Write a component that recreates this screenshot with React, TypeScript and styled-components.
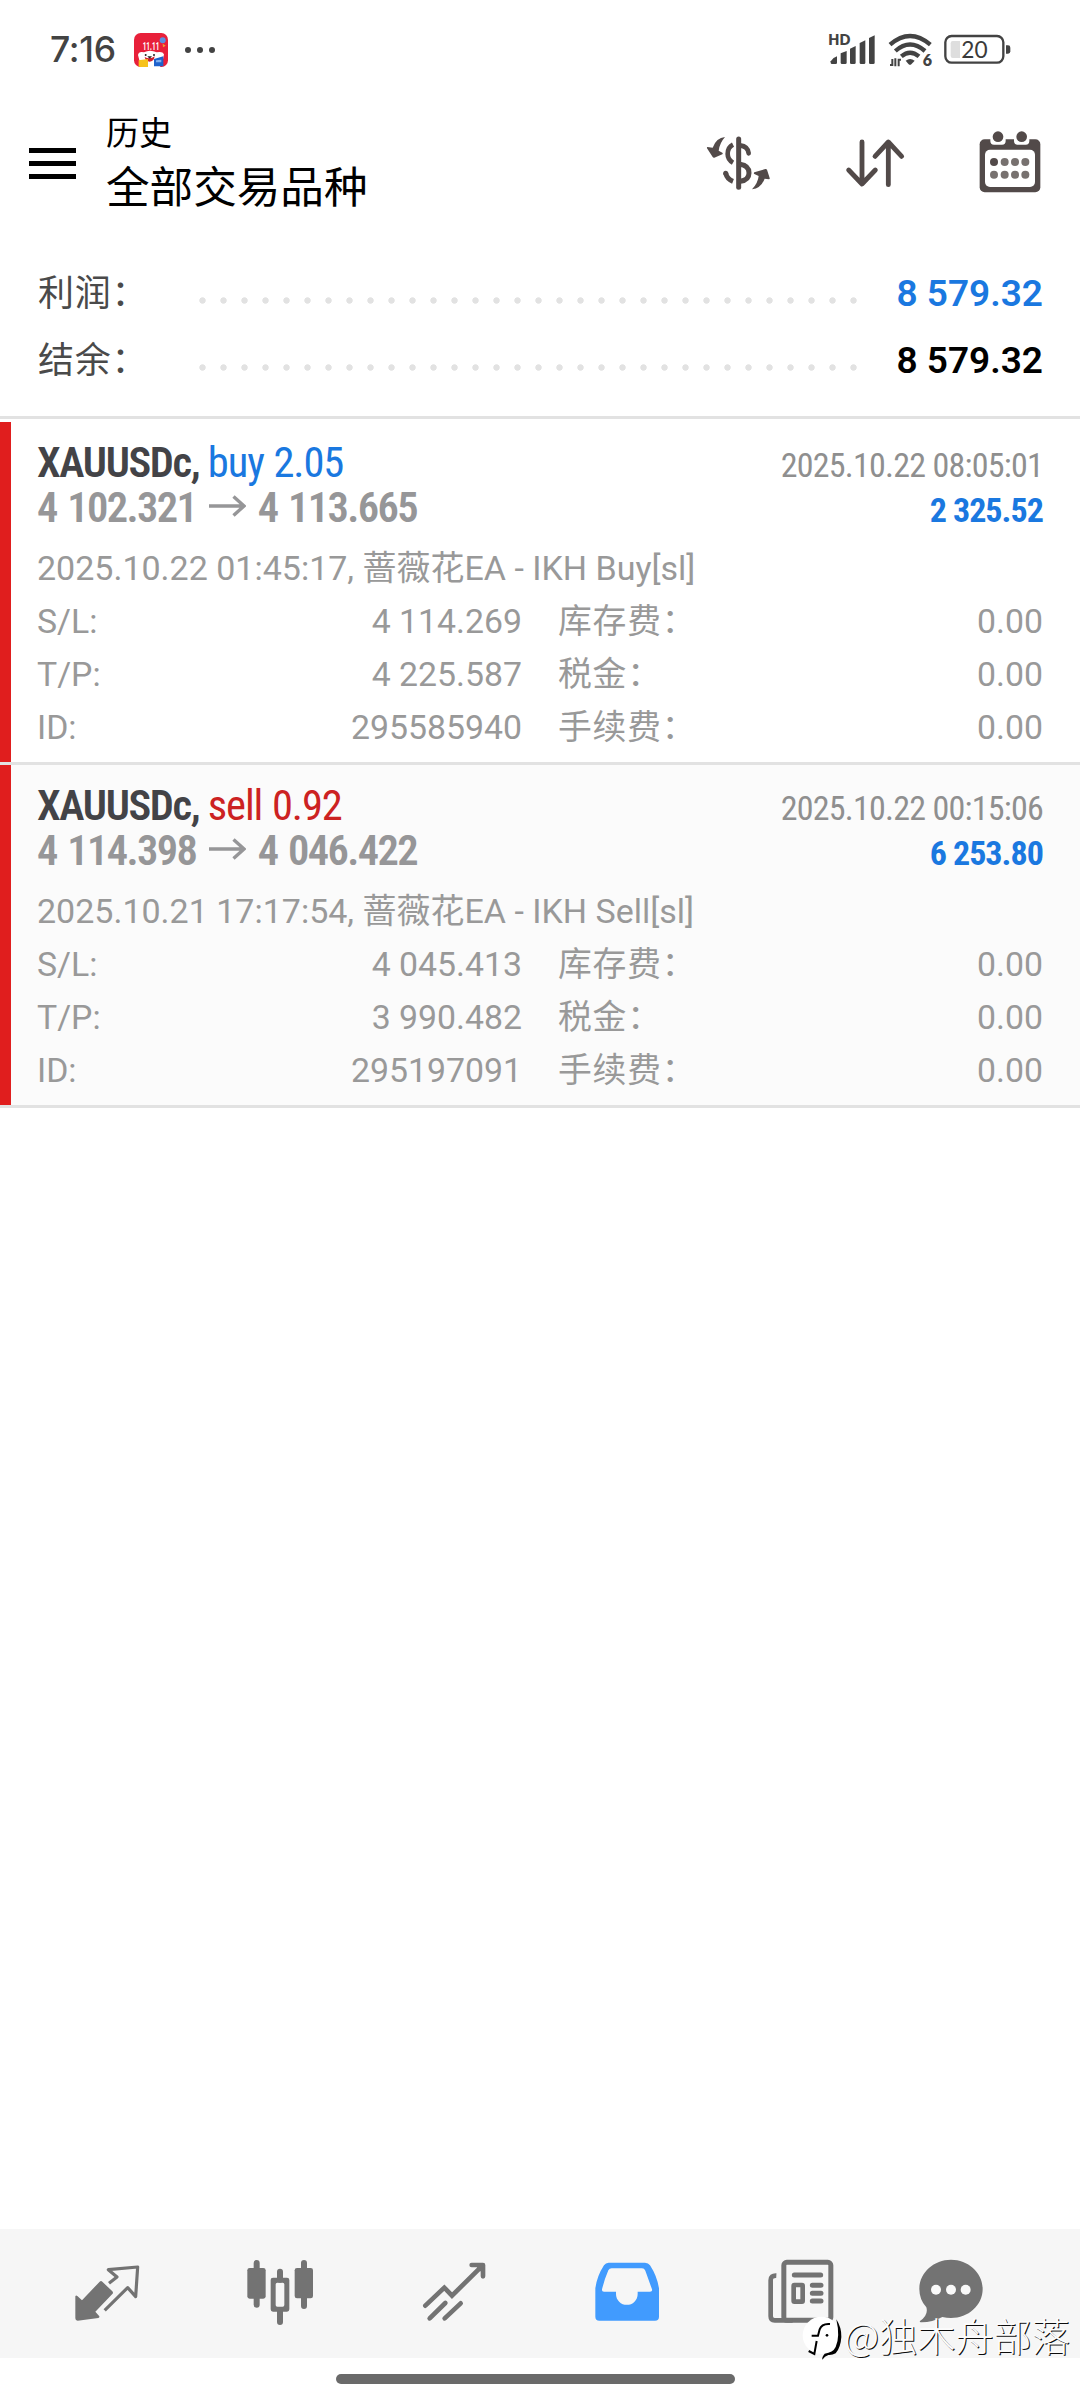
import React from "react";
import styled, { createGlobalStyle } from "styled-components";

const Global = createGlobalStyle`
  * { box-sizing: border-box; }
  body { margin: 0; background: #fff; }
`;

const SANS = `Roboto, "Noto Sans CJK SC", sans-serif`;
const CJK = `"Noto Sans CJK SC", Roboto, sans-serif`;
const BLUE = "#1a78e0";
const RED = "#cc2222";

const Screen = styled.div`
  position: relative;
  display: flex;
  flex-direction: column;
  width: 1080px;
  height: 2400px;
  background: #fff;
  font-family: ${SANS};
  overflow: hidden;
`;

/* ---------- status bar ---------- */
const StatusBar = styled.div`
  display: flex;
  align-items: center;
  justify-content: space-between;
  height: 100px;
  padding: 0 69px 0 50px;
`;
const StatusGroup = styled.div`
  display: flex;
  align-items: center;
`;
const Clock = styled.span`
  width: 84px;
  font: 500 35.5px/40px Inter, sans-serif;
  letter-spacing: -0.3px;
  color: #434343;
`;
const MoreDots = styled.div`
  display: flex;
  gap: 6px;
  margin-left: 17px;
`;
const Dot = styled.i`
  width: 6px;
  height: 6px;
  border-radius: 50%;
  background: #434343;
`;
const SignalSlot = styled.div`
  display: flex;
  gap: 11.5px;
  align-items: center;
`;

/* ---------- header ---------- */
const Header = styled.header`
  display: flex;
  align-items: center;
  height: 126px;
  padding: 0 35px 0 29px;
`;
const MenuButton = styled.div`
  display: flex;
  flex-direction: column;
  gap: 8px;
  width: 47px;
`;
const MenuLine = styled.i`
  height: 5px;
  background: #000;
`;
const Titles = styled.div`
  flex: 1;
  margin-left: 30px;
  padding-bottom: 3px;
  color: #000;
  font-family: ${CJK};
`;
const Caption = styled.div`
  font-size: 33px;
  line-height: 46px;
`;
const Title = styled.div`
  font-size: 43.6px;
  line-height: 61px;
`;
const Actions = styled.div`
  display: flex;
  gap: 65.5px;
`;

/* ---------- summary ---------- */
const Summary = styled.section`
  height: 193px;
  padding: 33px 37px 0;
  border-bottom: 3px solid #e2e2e2;
`;
const SummaryRow = styled.div`
  display: flex;
  align-items: center;
  height: 66.7px;
`;
const SummaryLabel = styled.span`
  width: 155px;
  padding: 0 0 4px 1px;
  font: 400 36px/64px ${CJK};
  letter-spacing: 0.8px;
  color: #4a4a4a;
`;
const Leader = styled.div`
  width: 672px;
  height: 21px;
  margin-top: 17px;
  background: radial-gradient(circle at 50% 50%, #e2e2e2 2.8px, transparent 3.6px) 0 0 / 21px 21px repeat-x;
`;
const SummaryValue = styled.span<{ $color: string }>`
  flex: 1;
  padding-top: 3px;
  text-align: right;
  font-size: 37px;
  font-weight: 600;
  line-height: 62px;
  color: ${(p) => p.$color};
`;

/* ---------- deals ---------- */
const Deals = styled.main`
  flex: 1;
  padding-top: 3px;
`;
const Deal = styled.article<{ $alt: boolean }>`
  height: 343px;
  padding: 18px 37px 0;
  border-bottom: 3px solid #e2e2e2;
  background: ${(p) => (p.$alt ? "#fbfbfb" : "#fff")};
  box-shadow: inset 11px 0 0 #e01e1e;
`;
const DealLine = styled.div`
  display: flex;
  align-items: baseline;
  justify-content: space-between;
  height: 45px;
  line-height: 45px;
  font-stretch: 75%;
  white-space: nowrap;
`;
const Instrument = styled.div<{ $side: string }>`
  font-size: 42.5px;
  font-weight: 600;
  letter-spacing: -1.35px;
  color: #434347;
  span {
    font-weight: 400;
    letter-spacing: -1.1px;
    word-spacing: 1px;
    color: ${(p) => p.$side};
  }
`;
const When = styled.span`
  font-size: 34px;
  letter-spacing: -0.75px;
  color: #8f8f8f;
`;
const Prices = styled.div`
  font-size: 42.5px;
  font-weight: 600;
  letter-spacing: -1.6px;
  word-spacing: 2.2px;
  color: #969698;
`;
const Profit = styled.span`
  font-size: 34px;
  font-weight: 700;
  letter-spacing: -0.95px;
  color: ${BLUE};
`;
const Comment = styled.div`
  margin-top: 12px;
  height: 53px;
  font-size: 34px;
  line-height: 53px;
  color: #999;
  white-space: nowrap;
`;
const Details = styled.div`
  display: grid;
  grid-template-columns: 160px 325px 1fr auto;
  font-size: 33.8px;
  line-height: 53px;
  color: #999;
`;
const Cell = styled.span<{ $right?: boolean }>`
  text-align: ${(p) => (p.$right ? "right" : "left")};
`;
const FeeLabel = styled(Cell)`
  padding-left: 36px;
  letter-spacing: 0.8px;
`;

/* ---------- bottom ---------- */
const NavBar = styled.nav`
  display: grid;
  grid-template-columns: repeat(5, 173.5px) 127px;
  align-items: center;
  justify-items: center;
  height: 129px;
  padding: 0 0 1px 20px;
  background: #f6f6f6;
`;
const GestureArea = styled.div`
  display: flex;
  justify-content: center;
  height: 42px;
  padding: 16px 9px 0 0;
`;
const GestureBar = styled.i`
  width: 399px;
  height: 10px;
  border-radius: 5px;
  background: #6a6a6a;
`;
const Watermark = styled.div`
  position: absolute;
  right: 10px;
  bottom: 32px;
  display: flex;
  align-items: center;
  height: 60px;
  font: 300 38.2px/56px ${CJK};
  color: #fcfcfc;
  text-shadow: 1px 1px 0 #0c0c0c;
  white-space: nowrap;
  span {
    padding-bottom: 6px;
  }
`;

/* Icons share a 210-unit grid, three units to a pixel. */
const Icon = ({ x, y = 55, children }: { x: number; y?: number; children: React.ReactNode }) => (
  <svg width="70" height="70" viewBox={`${x} ${y} 210 210`} fill="none" strokeLinecap="round" strokeLinejoin="round">
    {children}
  </svg>
);

const INK = "#524a49";
const NAV = "#737373";

const BadgeSvg = styled.svg`
  overflow: visible;
`;

const AppBadge = () => (
  <BadgeSvg width="34" height="34" viewBox="0 0 102 102">
    <defs>
      <clipPath id="badge"><rect width="102" height="102" rx="20" /></clipPath>
    </defs>
    <g clipPath="url(#badge)">
      <rect width="102" height="102" fill="#e8203a" />
      <circle cx="86" cy="22" r="9" fill="#5b8fe0" />
      <path d="M86 32l9 6-8 5z" fill="#f0a030" />
      <path d="M12 66Q14 54 30 58Q48 48 68 58Q86 54 90 64L86 84L78 102H26L16 82Z" fill="#fff" />
      <circle cx="35" cy="66" r="3" fill="#222" />
      <circle cx="60" cy="66" r="3" fill="#222" />
      <path d="M32 72Q48 80 62 70Q60 86 46 86Q34 84 32 72Z" fill="#d02030" />
      <path d="M40 70h14l-7 7z" fill="#222" />
      <path d="M14 82l28-4v24H14z" fill="#f7c21c" />
      <path d="M60 78l28-8v30H60z" fill="#1e62cc" />
      <path d="M66 82l16-2v8H66z" fill="#7fb0ee" />
    </g>
    <text x="26" y="51" fontSize="32" fontWeight="700" fontFamily="Roboto, sans-serif" fill="#fff" textLength="50" lengthAdjust="spacingAndGlyphs">11.11</text>
  </BadgeSvg>
);

const Signal = () => (
  <svg width="48" height="40" viewBox="445 90 144 120" fill="#434343">
    <text x="446" y="136" fontSize="43" fontWeight="800" fontFamily="Lato, sans-serif" textLength="66" lengthAdjust="spacingAndGlyphs">HD</text>
    <path d="M453 184q8-12 19-15v19q0 4-4 4h-11q-4 0-4-4z" />
    <path d="M483 160l18-7v35q0 4-4 4h-10q-4 0-4-4z" />
    <path d="M511 146l17-8v50q0 4-4 4h-9q-4 0-4-4z" />
    <path d="M540 129l17-8v67q0 4-4 4h-9q-4 0-4-4z" />
    <path d="M568 114l17-8v82q0 4-4 4h-9q-4 0-4-4z" />
  </svg>
);

const Wifi = () => (
  <svg width="45" height="40" viewBox="620 90 135 120" fill="none" stroke="#434343" strokeWidth="13">
    <path d="M626 134Q686 82 747 134" />
    <path d="M642 153Q686 114 731 153" />
    <path d="M660 169Q686 147 713 169" />
    <path d="M673 182Q686 172 700 182L690 193Q686 196 682 193Z" fill="#434343" stroke="none" />
    <path d="M633 177v18h-7M642 175v24M652 199v-20h7" strokeWidth="6" />
    <text x="724" y="198" fontSize="48" fontWeight="800" fontFamily="Lato, sans-serif" fill="#434343" stroke="none">6</text>
  </svg>
);

const Battery = () => (
  <svg width="67" height="40" viewBox="792 90 201 120">
    <rect x="796" y="108" width="174" height="80" rx="19" fill="none" stroke="#434343" strokeWidth="7" />
    <path d="M818 123h22v51h-22q-6 0-6-7v-37q0-7 6-7z" fill="#dedede" />
    <path d="M978 136h6q7 0 7 7v11q0 7-7 7h-6z" fill="#434343" />
    <text x="844" y="174" fontSize="68" fontFamily="Lato, sans-serif" fill="#3a3a3a">20</text>
  </svg>
);

const CurrencyIcon = () => (
  <Icon x={75} y={385}>
    <path d="M179 418V563" stroke={INK} strokeWidth="15" />
    <path d="M162 435Q146 443 146 463Q146 480 162 489" stroke={INK} strokeWidth="14" strokeLinecap="butt" />
    <path d="M183 437Q207 440 209 461" stroke={INK} strokeWidth="14" />
    <path d="M183 494Q210 498 210 520Q210 541 184 545" stroke={INK} strokeWidth="15" />
    <path d="M140 520Q144 538 162 545" stroke={INK} strokeWidth="15" strokeLinecap="butt" />
    <circle cx="140" cy="521" r="7.5" fill={INK} />
    <path d="M138 412Q112 414 101 444L85 442Q83 443 84 446L101 472Q103 475 106 474L130 464Q133 461 130 459L119 453Q122 430 138 412Z" fill={INK} />
    <path d="M219 569Q246 566 257 537L270 539Q273 538 272 535L264 510Q262 507 259 508L226 518Q223 521 226 523L239 529Q237 550 219 569Z" fill={INK} />
  </Icon>
);

const SortIcon = () => (
  <Icon x={481} y={385}>
    <path d="M547 427V553M507 511L547 553L587 511M626 555V428M586 470L626 427L666 470" stroke={INK} strokeWidth="14.5" />
  </Icon>
);

const CalendarIcon = () => (
  <Icon x={886} y={385}>
    <rect x="900" y="419" width="182" height="159" rx="15" fill={INK} />
    <rect x="916" y="450" width="150" height="112" rx="15" fill="#fff" />
    <path d="M932 416h46v8q0 11-11 11h-24q-11 0-11-11zM1003 416h46v8q0 11-11 11h-24q-11 0-11-11z" fill="#fff" />
    <circle cx="955" cy="411" r="16" fill={INK} />
    <circle cx="1026" cy="411" r="16" fill={INK} />
    {[487, 525].map((cy) =>
      [943, 975, 1006, 1037].map((cx) => (
        <circle key={`${cx}-${cy}`} cx={cx} cy={cy} r="12" fill={cx === 943 && cy === 487 ? INK : "#77716f"} />
      ))
    )}
  </Icon>
);

const QuotesIcon = () => (
  <Icon x={38}>
    <path d="M121 126Q125 122 129 126L159 155Q163 159 159 163L108 216L120 230Q121 234 117 235L55 243Q48 243 48 236V170Q50 165 54 169L68 182Z" fill={NAV} />
    <path d="M149 131L173 112L147 90L235 82L229 171L205 144L136 212" stroke={NAV} strokeWidth="9.5" strokeLinecap="butt" strokeLinejoin="round" />
  </Icon>
);

const ChartIcon = () => (
  <Icon x={555}>
    <path d="M590 70V195M732 70V199M660 96V120M660 212V247" stroke={NAV} strokeWidth="18" />
    <rect x="562" y="85" width="55" height="92" rx="7" fill={NAV} />
    <rect x="704" y="85" width="55" height="91" rx="7" fill={NAV} />
    <path fillRule="evenodd" fill={NAV} d="M639 114H681Q688 114 688 121V209Q688 216 681 216H639Q632 216 632 209V121Q632 114 639 114ZM652 129Q647 129 647 134V196Q647 201 652 201H668Q673 201 673 196V134Q673 129 668 129Z" />
  </Icon>
);

const TradeIcon = () => (
  <Icon x={1074}>
    <g stroke={NAV} strokeWidth="14">
      <path d="M1093 198L1150 144L1173 168L1262 80" strokeLinejoin="miter" />
      <path d="M1232 76H1266V110" />
      <path d="M1106 236L1153 190M1151 236L1199 191" />
    </g>
    <path d="M1240 72H1270V106L1258 94L1250 86Z" fill={NAV} />
  </Icon>
);

const HistoryIcon = () => (
  <Icon x={396}>
    <path fillRule="evenodd" fill="#419bfe" d="M446 69H555Q565 69 570 77Q591 109 597 146V231Q597 243 585 243H418Q406 243 406 231V146Q411 109 432 77Q437 69 446 69ZM455 86Q448 86 445 92Q433 120 426 149Q425 156 432 156H468V163A32 32 0 0 0 533 163V156H570Q578 156 576 149L556 93Q553 86 546 86Z" />
  </Icon>
);

const NewsIcon = () => (
  <Icon x={920}>
    <rect x="973.5" y="68" width="141" height="174" rx="9" stroke={NAV} strokeWidth="15" />
    <path d="M951 108Q934 107 934 122V230Q934 242 946 242H1000" stroke={NAV} strokeWidth="14" strokeLinecap="butt" />
    <path d="M1005 106H1084M1059 137H1085M1059 160.500H1085M1059 184H1085" stroke={NAV} strokeWidth="15" />
    <rect x="1003" y="136" width="27" height="50" rx="2" stroke={NAV} strokeWidth="14" />
  </Icon>
);

const ChatIcon = () => (
  <Icon x={408}>
    <path d="M513 60C565 60 608 99 608 148S565 235 513 235Q500 235 487 232Q455 249 422 248Q418 247 420 244Q446 225 439 203Q418 180 418 148C418 99 461 60 513 60Z" fill={NAV} />
    {[468, 513, 557].map((cx) => (
      <circle key={cx} cx={cx} cy="150" r="15" fill="#f9f9f9" />
    ))}
  </Icon>
);

const LogoMark = () => (
  <svg width="42" height="48" viewBox="62 234 126 144" fill="none">
    <circle cx="120" cy="298" r="56" fill="#fff" />
    <path d="M146 264Q121 262 115 280L110 299H91M106 315L99 354L82 345" stroke="#000" strokeWidth="6" />
    <path d="M165 250Q181 275 180 303Q178 335 163 352Q153 358 141 357Q130 360 123 371Q121 363 130 353Q155 350 163 333Q177 303 165 250Z" fill="#000" />
    <circle cx="137" cy="298" r="4" fill="#000" />
  </svg>
);

const Arrow = styled.svg`
  margin: 0 11.5px 0 13px;
  vertical-align: 5px;
`;

const deals = [
  {
    side: "buy", volume: "2.05", color: BLUE, open: "4 102.321", close: "4 113.665",
    closed: "2025.10.22 08:05:01", profit: "2 325.52",
    comment: "2025.10.22 01:45:17, 蔷薇花EA - IKH Buy[sl]",
    rows: [["S/L:", "4 114.269", "库存费："], ["T/P:", "4 225.587", "税金："], ["ID:", "295585940", "手续费："]],
  },
  {
    side: "sell", volume: "0.92", color: RED, open: "4 114.398", close: "4 046.422",
    closed: "2025.10.22 00:15:06", profit: "6 253.80",
    comment: "2025.10.21 17:17:54, 蔷薇花EA - IKH Sell[sl]",
    rows: [["S/L:", "4 045.413", "库存费："], ["T/P:", "3 990.482", "税金："], ["ID:", "295197091", "手续费："]],
  },
];

export default function App() {
  return (
    <>
      <Global />
      <Screen>
        <StatusBar>
          <StatusGroup>
            <Clock>7:16</Clock>
            <AppBadge />
            <MoreDots><Dot /><Dot /><Dot /></MoreDots>
          </StatusGroup>
          <SignalSlot><Signal /><Wifi /><Battery /></SignalSlot>
        </StatusBar>

        <Header>
          <MenuButton><MenuLine /><MenuLine /><MenuLine /></MenuButton>
          <Titles>
            <Caption>历史</Caption>
            <Title>全部交易品种</Title>
          </Titles>
          <Actions><CurrencyIcon /><SortIcon /><CalendarIcon /></Actions>
        </Header>

        <Summary>
          <SummaryRow>
            <SummaryLabel>利润：</SummaryLabel>
            <Leader />
            <SummaryValue $color={BLUE}>8 579.32</SummaryValue>
          </SummaryRow>
          <SummaryRow>
            <SummaryLabel>结余：</SummaryLabel>
            <Leader />
            <SummaryValue $color="#000">8 579.32</SummaryValue>
          </SummaryRow>
        </Summary>

        <Deals>
          {deals.map((d, i) => (
            <Deal key={d.closed} $alt={i % 2 === 1}>
              <DealLine>
                <Instrument $side={d.color}>XAUUSDc, <span>{d.side} {d.volume}</span></Instrument>
                <When>{d.closed}</When>
              </DealLine>
              <DealLine>
                <Prices>
                  {d.open}
                  <Arrow width="37" height="22" viewBox="0 0 37 22" fill="none" stroke="#969698" strokeWidth="3.4">
                    <path d="M0 11H35M24.500 1.500L35 11L24.500 20.500" />
                  </Arrow>
                  {d.close}
                </Prices>
                <Profit>{d.profit}</Profit>
              </DealLine>
              <Comment>{d.comment}</Comment>
              <Details>
                {d.rows.map(([label, value, fee]) => (
                  <React.Fragment key={label}>
                    <Cell>{label}</Cell>
                    <Cell $right>{value}</Cell>
                    <FeeLabel>{fee}</FeeLabel>
                    <Cell $right>0.00</Cell>
                  </React.Fragment>
                ))}
              </Details>
            </Deal>
          ))}
        </Deals>

        <NavBar>
          <QuotesIcon /><ChartIcon /><TradeIcon /><HistoryIcon /><NewsIcon /><ChatIcon />
        </NavBar>
        <GestureArea><GestureBar /></GestureArea>
        <Watermark><LogoMark /><span>@独木舟部落</span></Watermark>
      </Screen>
    </>
  );
}
